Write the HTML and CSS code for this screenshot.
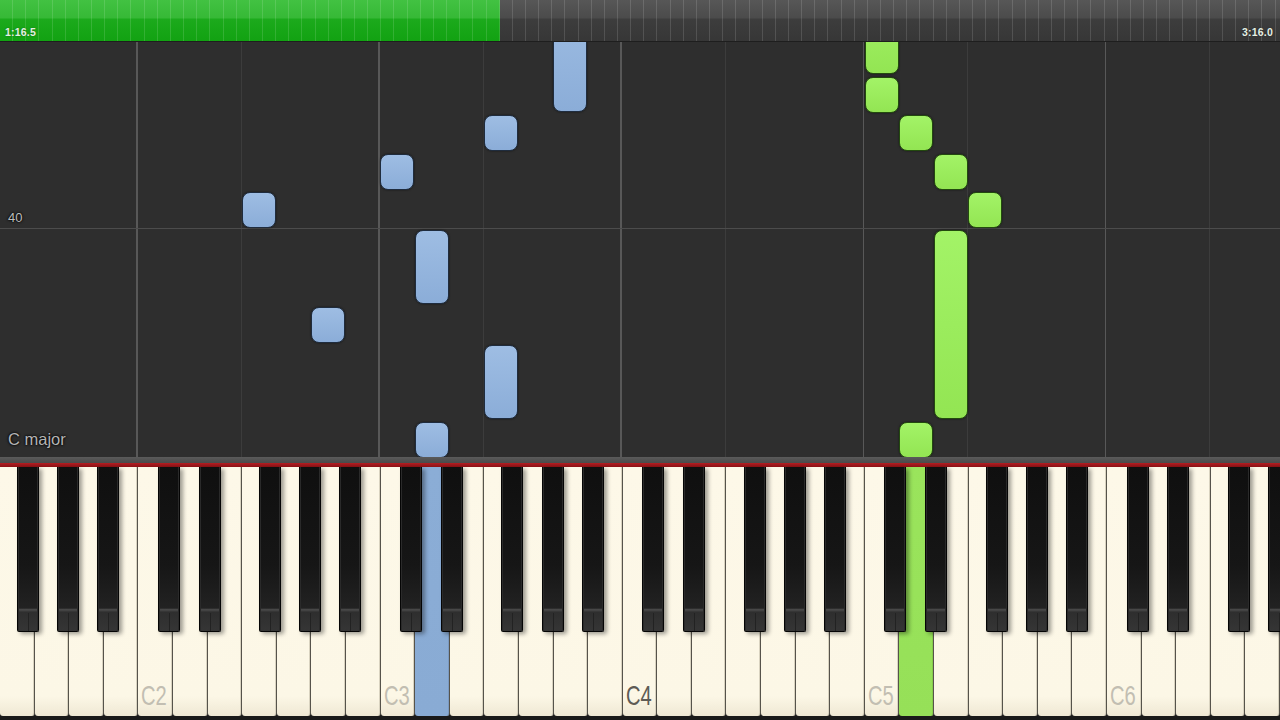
FILE: index.html
```html
<!DOCTYPE html>
<html>
<head>
<meta charset="utf-8">
<link rel="stylesheet" href="styles.css">
</head>
<body>
<div class="app">
  <div class="top">
    <div class="fill" style="width:39.05%"></div>
    <span class="time">1:16.5</span>
    <span class="time">3:16.0</span>
  </div>
  <div class="roll">
    <span class="mark">40</span>
    <span class="key-sig">C major</span>
    <div class="note blue" style="left:553px;top:-40px;height:110px"></div>
    <div class="note blue" style="left:484px;top:73px;height:36px"></div>
    <div class="note blue" style="left:380px;top:112px;height:36px"></div>
    <div class="note blue" style="left:242px;top:150px;height:36px"></div>
    <div class="note blue" style="left:311px;top:265px;height:36px"></div>
    <div class="note blue" style="left:415px;top:188px;height:74px"></div>
    <div class="note blue" style="left:484px;top:303px;height:74px"></div>
    <div class="note blue" style="left:415px;top:380px;height:36px"></div>
    <div class="note green" style="left:865px;top:-40px;height:72px"></div>
    <div class="note green" style="left:865px;top:35px;height:36px"></div>
    <div class="note green" style="left:899px;top:73px;height:36px"></div>
    <div class="note green" style="left:934px;top:112px;height:36px"></div>
    <div class="note green" style="left:968px;top:150px;height:36px"></div>
    <div class="note green" style="left:934px;top:188px;height:189px"></div>
    <div class="note green" style="left:899px;top:380px;height:36px"></div>
  </div>
  <div class="rail"></div>
  <div class="redline"></div>
  <div class="keys">
    <div class="wk"><span class="bk fs"></span></div>
    <div class="wk"><span class="bk gs"></span></div>
    <div class="wk"><span class="bk as"></span></div>
    <div class="wk"></div>
    <div class="wk"><span class="lbl">C2</span><span class="bk cs"></span></div>
    <div class="wk"><span class="bk ds"></span></div>
    <div class="wk"></div>
    <div class="wk"><span class="bk fs"></span></div>
    <div class="wk"><span class="bk gs"></span></div>
    <div class="wk"><span class="bk as"></span></div>
    <div class="wk"></div>
    <div class="wk"><span class="lbl">C3</span><span class="bk cs"></span></div>
    <div class="wk on-blue"><span class="bk ds"></span></div>
    <div class="wk"></div>
    <div class="wk"><span class="bk fs"></span></div>
    <div class="wk"><span class="bk gs"></span></div>
    <div class="wk"><span class="bk as"></span></div>
    <div class="wk"></div>
    <div class="wk"><span class="lbl mid">C4</span><span class="bk cs"></span></div>
    <div class="wk"><span class="bk ds"></span></div>
    <div class="wk"></div>
    <div class="wk"><span class="bk fs"></span></div>
    <div class="wk"><span class="bk gs"></span></div>
    <div class="wk"><span class="bk as"></span></div>
    <div class="wk"></div>
    <div class="wk"><span class="lbl">C5</span><span class="bk cs"></span></div>
    <div class="wk on-green"><span class="bk ds"></span></div>
    <div class="wk"></div>
    <div class="wk"><span class="bk fs"></span></div>
    <div class="wk"><span class="bk gs"></span></div>
    <div class="wk"><span class="bk as"></span></div>
    <div class="wk"></div>
    <div class="wk"><span class="lbl">C6</span><span class="bk cs"></span></div>
    <div class="wk"><span class="bk ds"></span></div>
    <div class="wk"></div>
    <div class="wk"><span class="bk fs"></span></div>
    <div class="wk"><span class="bk gs"></span></div>
  </div>
</div>
</body>
</html>
```

FILE: styles.css
```css
* { box-sizing: border-box; }
html, body { margin: 0; padding: 0; background: #2e2e2e; }
body { font-family: "Liberation Sans", Arial, sans-serif; }

.app {
  width: 1280px;
  height: 720px;
  display: flex;
  flex-direction: column;
  overflow: hidden;
}

/* ---------- top progress bar ---------- */
.top {
  position: relative;
  height: 42px;
  flex: none;
  display: flex;
  justify-content: space-between;
  align-items: flex-end;
  padding: 0 7px 3px 5px;
  background: linear-gradient(#575757 0, #4b4b4b 18px, #3d3d3d 19px, #363636 42px);
  border-bottom: 1px solid #1e1e1e;
}
.top::after {
  content: "";
  position: absolute;
  inset: 0;
  background: repeating-linear-gradient(to right,
    transparent 0, transparent 12.15px,
    rgba(255,255,255,0.13) 12.15px, rgba(255,255,255,0.13) 13.15px);
  pointer-events: none;
}
.fill {
  position: absolute;
  left: 0; top: 0; bottom: 0;
  background: linear-gradient(#42c242 0, #36b936 18px, #1caa1c 19px, #12a212 41px);
}
.time {
  position: relative;
  z-index: 2;
  font-size: 10.5px;
  font-weight: bold;
  color: #e4f0e4;
  letter-spacing: 0.2px;
  text-shadow: 0 0 2px rgba(0,0,0,0.35);
}

/* ---------- note roll ---------- */
.roll {
  position: relative;
  flex: none;
  height: 415px;
  overflow: hidden;
  background-color: #2e2e2e;
  background-image:
    linear-gradient(#4c4c4c, #4c4c4c),
    repeating-linear-gradient(to right,
      transparent 0, transparent 136px,
      #585858 136px, #585858 137.8px,
      transparent 137.8px, transparent 240.6px,
      #3c3c3c 240.6px, #3c3c3c 241.6px,
      transparent 241.6px, transparent 242.17px);
  background-size: 100% 1px, 100% 100%;
  background-position: 0 186px, 0 0;
  background-repeat: no-repeat, no-repeat;
}
.mark {
  position: absolute;
  left: 8px;
  top: 168px;
  font-size: 13px;
  color: #bcbcbc;
  text-shadow: 0 0 3px #000, 0 0 2px #000;
}
.key-sig {
  position: absolute;
  left: 8px;
  top: 388px;
  font-size: 16.5px;
  color: #b4b4b4;
  text-shadow: 0 0 3px #000, 0 0 2px #000;
}
.note {
  position: absolute;
  width: 34px;
  border-radius: 8px;
  box-shadow: 0 0 2px rgba(0,0,0,0.6);
}
.note.blue {
  background: linear-gradient(#9ebde3, #8badd8);
  border: 1.5px solid #1f2c3e;
}
.note.green {
  background: linear-gradient(#a3f367, #93e553);
  border: 1.5px solid #234a0e;
}

/* ---------- keyboard ---------- */
.rail {
  height: 6px;
  flex: none;
  background: linear-gradient(#5a5a5a, #4a4a4a);
}
.redline {
  height: 4px;
  flex: none;
  background: linear-gradient(#b21e22, #8a1216);
}
.keys {
  flex: none;
  height: 253px;
  display: flex;
  background: #1a1a1a;
  padding-bottom: 4px;
}
.wk {
  position: relative;
  flex: 1 1 0;
  min-width: 0;
  display: flex;
  align-items: flex-end;
  padding: 0 0 6px 3px;
  background: linear-gradient(#fdf8e8 0, #fcf7e6 92%, #efe8d4 100%);
  border-right: 1px solid #56534b;
  border-radius: 0 0 3px 3px;
  box-shadow: inset -1px 0 0 #d9d3c0;
}
.wk.on-blue {
  background: linear-gradient(#8badd6, #89abd4);
  box-shadow: inset -1px 0 0 #7a99c0;
}
.wk.on-green {
  background: linear-gradient(#9ae45c, #96e058);
  box-shadow: inset -1px 0 0 #86cc4c;
}
.lbl {
  display: inline-block;
  flex: none;
  font-size: 28px;
  line-height: 1;
  color: #c2beb2;
  transform: scaleX(0.72);
  transform-origin: left bottom;
}
.lbl.mid { color: #5e5b55; }

.bk {
  position: absolute;
  top: 0;
  left: 100%;
  z-index: 3;
  width: 22px;
  height: 165px;
  margin-left: -11px;
  border: 1px solid #050505;
  border-top: none;
  border-radius: 0 0 2px 2px;
  background: linear-gradient(#0f0f0f 0, #161616 60%, #222 86%, #4c4c4c 87%, #2e2e2e 88.5%, #353535 100%);
  box-shadow: inset 1px 0 0 #2a2a2a, inset -1px 0 0 #2a2a2a, 3px 2px 4px rgba(0,0,0,0.38);
}
.bk::after {
  content: "";
  position: absolute;
  left: 50%;
  bottom: 0;
  width: 1px;
  height: 18px;
  background: #222;
}
.bk.cs { margin-left: -14px; }
.bk.ds { margin-left: -8px; }
.bk.fs { margin-left: -16.5px; }
.bk.gs { margin-left: -11px; }
.bk.as { margin-left: -5.5px; }
```
